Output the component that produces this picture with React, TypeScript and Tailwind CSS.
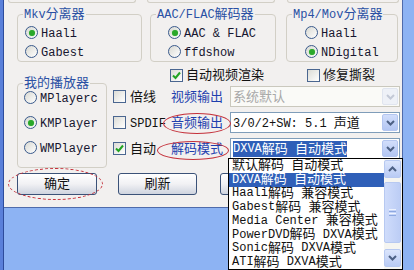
import React from "react";

// split text into CJK / latin runs so each gets its own size (SimSun look)
const T = ({ s }: { s: string }) => (
  <>
    {s.split(/([\u3000-\u9fff\uff00-\uffef]+)/).map((p, i) =>
      p === "" ? null : i % 2 ? (
        <span key={i} className="text-[13px]">
          {p}
        </span>
      ) : (
        <span key={i} className="text-[12px]">
          {p}
        </span>
      )
    )}
  </>
);

const Chevron = ({ up, color }: { up?: boolean; color: string }) => (
  <svg width="9" height="6" viewBox="0 0 9 6">
    <path
      d={up ? "M1 5 L4.5 1.5 L8 5" : "M1 1 L4.5 4.5 L8 1"}
      stroke={color}
      strokeWidth="2"
      fill="none"
    />
  </svg>
);

const Radio = ({ label, checked }: { label: string; checked?: boolean }) => (
  <div className="flex h-[19px] items-center gap-[3px]">
    <span className="flex h-[13px] w-[13px] items-center justify-center rounded-full border border-[#3a5a8c] bg-linear-to-br from-[#d8d8d2] to-white">
      {checked && <span className="h-[6px] w-[6px] rounded-full bg-[#2aa82a] shadow-[0_0_1px_#7fd67f]" />}
    </span>
    <span className="whitespace-pre">
      <T s={label} />
    </span>
  </div>
);

const Check = ({ checked }: { checked?: boolean }) => (
  <span className="flex h-[13px] w-[13px] shrink-0 items-center justify-center border border-[#4a6690] bg-linear-to-br from-[#dcdcd6] to-white">
    {checked && (
      <svg width="9" height="9" viewBox="0 0 9 9">
        <path d="M1 4.5 L3.5 7 L8 1.5" stroke="#22a322" strokeWidth="2" fill="none" />
      </svg>
    )}
  </span>
);

const Group = ({
  label,
  className,
  children,
}: {
  label: string;
  className: string;
  children: React.ReactNode;
}) => (
  <div className={`relative rounded-[4px] border border-[#d2cfc6] ${className}`}>
    <span className="absolute left-[5px] top-[-8px] bg-[#f2f0ef] px-[1px] leading-[15px] text-[#2a50a4] whitespace-pre">
      <T s={label} />
    </span>
    {children}
  </div>
);

const Combo = ({ children, disabled }: { children: React.ReactNode; disabled?: boolean }) => (
  <div
    className={`flex h-[21px] w-[170px] items-center border ${
      disabled ? "border-[#cac8bd] bg-[#fafaf7] text-[#a8a8a8]" : "border-[#7f9db9] bg-white text-[#111]"
    }`}
  >
    <div className="flex-1 overflow-hidden pl-[2px] whitespace-pre">{children}</div>
    <div
      className={`mr-[1px] flex h-[17px] w-[16px] items-center justify-center rounded-[2px] border ${
        disabled ? "border-[#e0e5ef] bg-[#eef1f7]" : "border-[#b4c6f0] bg-linear-to-b from-[#d2defb] to-[#b3c6f3]"
      }`}
    >
      <Chevron color={disabled ? "#c3c9d6" : "#4d6185"} />
    </div>
  </div>
);

const Button = ({ label, className }: { label: string; className: string }) => (
  <div
    className={`flex h-[22px] items-center justify-center rounded-[3px] border border-[#3b5278] bg-linear-to-b from-white via-[#f1f1f4] to-[#cfd4df] text-[13px] text-[#111] ${className}`}
  >
    {label}
  </div>
);

const items = [
  "默认解码 自动模式",
  "DXVA解码 自动模式",
  "Haali解码 兼容模式",
  "Gabest解码 兼容模式",
  "Media Center 兼容模式",
  "PowerDVD解码 DXVA模式",
  "Sonic解码 DXVA模式",
  "ATI解码 DXVA模式",
];

const ScrollBtn = ({ up }: { up?: boolean }) => (
  <div className="flex h-[18px] w-[17px] items-center justify-center rounded-[2px] border border-[#b7c9f1] bg-linear-to-b from-[#dbe5fc] to-[#b9cbf4]">
    <Chevron up={up} color="#4d6185" />
  </div>
);

export default function App() {
  return (
    <div className="relative flex h-[270px] w-[414px] overflow-hidden bg-[#8db3f3] font-['Liberation_Mono','Noto_Sans_CJK_SC',monospace] leading-none text-[#161630]">
      <div className="w-[4px] border-r border-[#2d4c9c] bg-[#5a80da]" />
      <div className="flex h-[208px] flex-1">
        <div className="flex w-[398px] flex-col border-b border-[#4f6bab] bg-[#f2f0ef]">
          {/* bottoms of the boxes above */}
          <div className="flex h-[3px]">
            <div className="ml-[4px] w-[128px] rounded-b-[3px] border-x border-b border-[#d2cfc6]" />
            <div className="ml-[11px] w-[128px] rounded-b-[3px] border-x border-b border-[#d2cfc6]" />
            <div className="ml-[12px] w-[112px] rounded-b-[3px] border-x border-b border-[#d2cfc6]" />
          </div>

          <div className="mt-[11px] flex">
            <Group label="Mkv分离器" className="ml-[13px] h-[48px] w-[125px] pl-[7px] pt-[8px]">
              <Radio label="Haali" checked />
              <Radio label="Gabest" />
            </Group>
            <Group label="AAC/FLAC解码器" className="ml-[8px] h-[48px] w-[126px] pl-[17px] pt-[8px]">
              <Radio label="AAC & FLAC" checked />
              <Radio label="ffdshow" />
            </Group>
            <Group label="Mp4/Mov分离器" className="ml-[10px] h-[48px] w-[112px] pl-[18px] pt-[8px]">
              <Radio label="Haali" />
              <Radio label="NDigital" checked />
            </Group>
          </div>

          <div className="flex">
            <Group label="我的播放器" className="ml-[13px] mt-[21px] h-[85px] w-[90px] pl-[6px] pt-[4px]">
              <div className="flex flex-col gap-[6px]">
                <Radio label="MPlayerc" />
                <Radio label="KMPlayer" checked />
                <Radio label="WMPlayer" />
              </div>
            </Group>

            <div className="flex flex-col">
              <div className="mt-[5px] flex h-[16px] items-center pl-[63px]">
                <Check checked />
                <span className="ml-[3px] w-[121px] text-[#111]">
                  <T s="自动视频渲染" />
                </span>
                <Check />
                <span className="ml-[3px] text-[#111]">
                  <T s="修复撕裂" />
                </span>
              </div>

              <div className="mt-[3px] flex flex-col gap-[5px] pl-[6px]">
                <div className="flex items-center">
                  <Check />
                  <span className="ml-[4px] w-[41px] text-[#111]">
                    <T s="倍线" />
                  </span>
                  <span className="w-[59px] text-[#1e3fae]">
                    <T s="视频输出" />
                  </span>
                  <Combo disabled>
                    <T s="系统默认" />
                  </Combo>
                </div>
                <div className="flex items-center">
                  <Check />
                  <span className="ml-[4px] w-[41px] text-[#111]">
                    <T s="SPDIF" />
                  </span>
                  <span className="w-[59px] text-[#1e3fae]">
                    <T s="音频输出" />
                  </span>
                  <Combo>
                    <T s="3/0/2+SW: 5.1 声道" />
                  </Combo>
                </div>
                <div className="flex items-center">
                  <Check checked />
                  <span className="ml-[4px] w-[41px] text-[#111]">
                    <T s="自动" />
                  </span>
                  <span className="w-[59px] text-[#1e3fae]">
                    <T s="解码模式" />
                  </span>
                  <Combo>
                    <span className="inline-flex h-[16px] items-center bg-[#2f5fb8] text-white">
                      <T s="DXVA解码 自动模式" />
                    </span>
                  </Combo>
                </div>
              </div>
            </div>
          </div>

          <div className="mt-[5px] flex">
            <Button label="确定" className="ml-[13px] w-[80px]" />
            <Button label="刷新" className="ml-[21px] w-[79px]" />
            <Button label="应用" className="ml-[23px] w-[80px]" />
          </div>
        </div>
        <div className="flex-1 border-l border-[#4f6bab]" />
      </div>

      {/* open dropdown list */}
      <div className="absolute left-[228px] top-[158px] flex h-[112px] w-[175px] border border-black bg-white">
        <div className="flex flex-1 flex-col">
          {items.map((it, i) => (
            <div
              key={it}
              className={`flex h-[13.75px] items-center pl-[3px] whitespace-pre ${
                i === 1 ? "bg-[#2f5fb8] text-white" : "text-[#111]"
              }`}
            >
              <T s={it} />
            </div>
          ))}
        </div>
        <div className="flex w-[18px] flex-col items-start bg-[#f5f5f1] pt-[1px]">
          <ScrollBtn up />
          <div className="mt-[4px] flex h-[61px] w-[17px] flex-col items-center justify-center gap-[1px] rounded-[2px] border border-[#b7c9f1] bg-linear-to-r from-[#cfdcfb] to-[#bccdf5]">
            <div className="h-[1px] w-[7px] bg-[#eef3fe]" />
            <div className="h-[1px] w-[7px] bg-[#8ea8e0]" />
            <div className="h-[1px] w-[7px] bg-[#eef3fe]" />
            <div className="h-[1px] w-[7px] bg-[#8ea8e0]" />
          </div>
          <div className="flex-1" />
          <div className="mb-[2px]">
            <ScrollBtn />
          </div>
        </div>
      </div>

      {/* red annotation ellipses */}
      <div className="absolute left-[8px] top-[168px] h-[32px] w-[95px] rounded-[50%] border border-dashed border-[#c4303a]" />
      <div className="absolute left-[163px] top-[113px] h-[21px] w-[68px] rounded-[50%] border border-[#c4303a]" />
      <div className="absolute left-[157px] top-[141px] h-[19px] w-[72px] rounded-[50%] border border-[#c4303a]" />
    </div>
  );
}
